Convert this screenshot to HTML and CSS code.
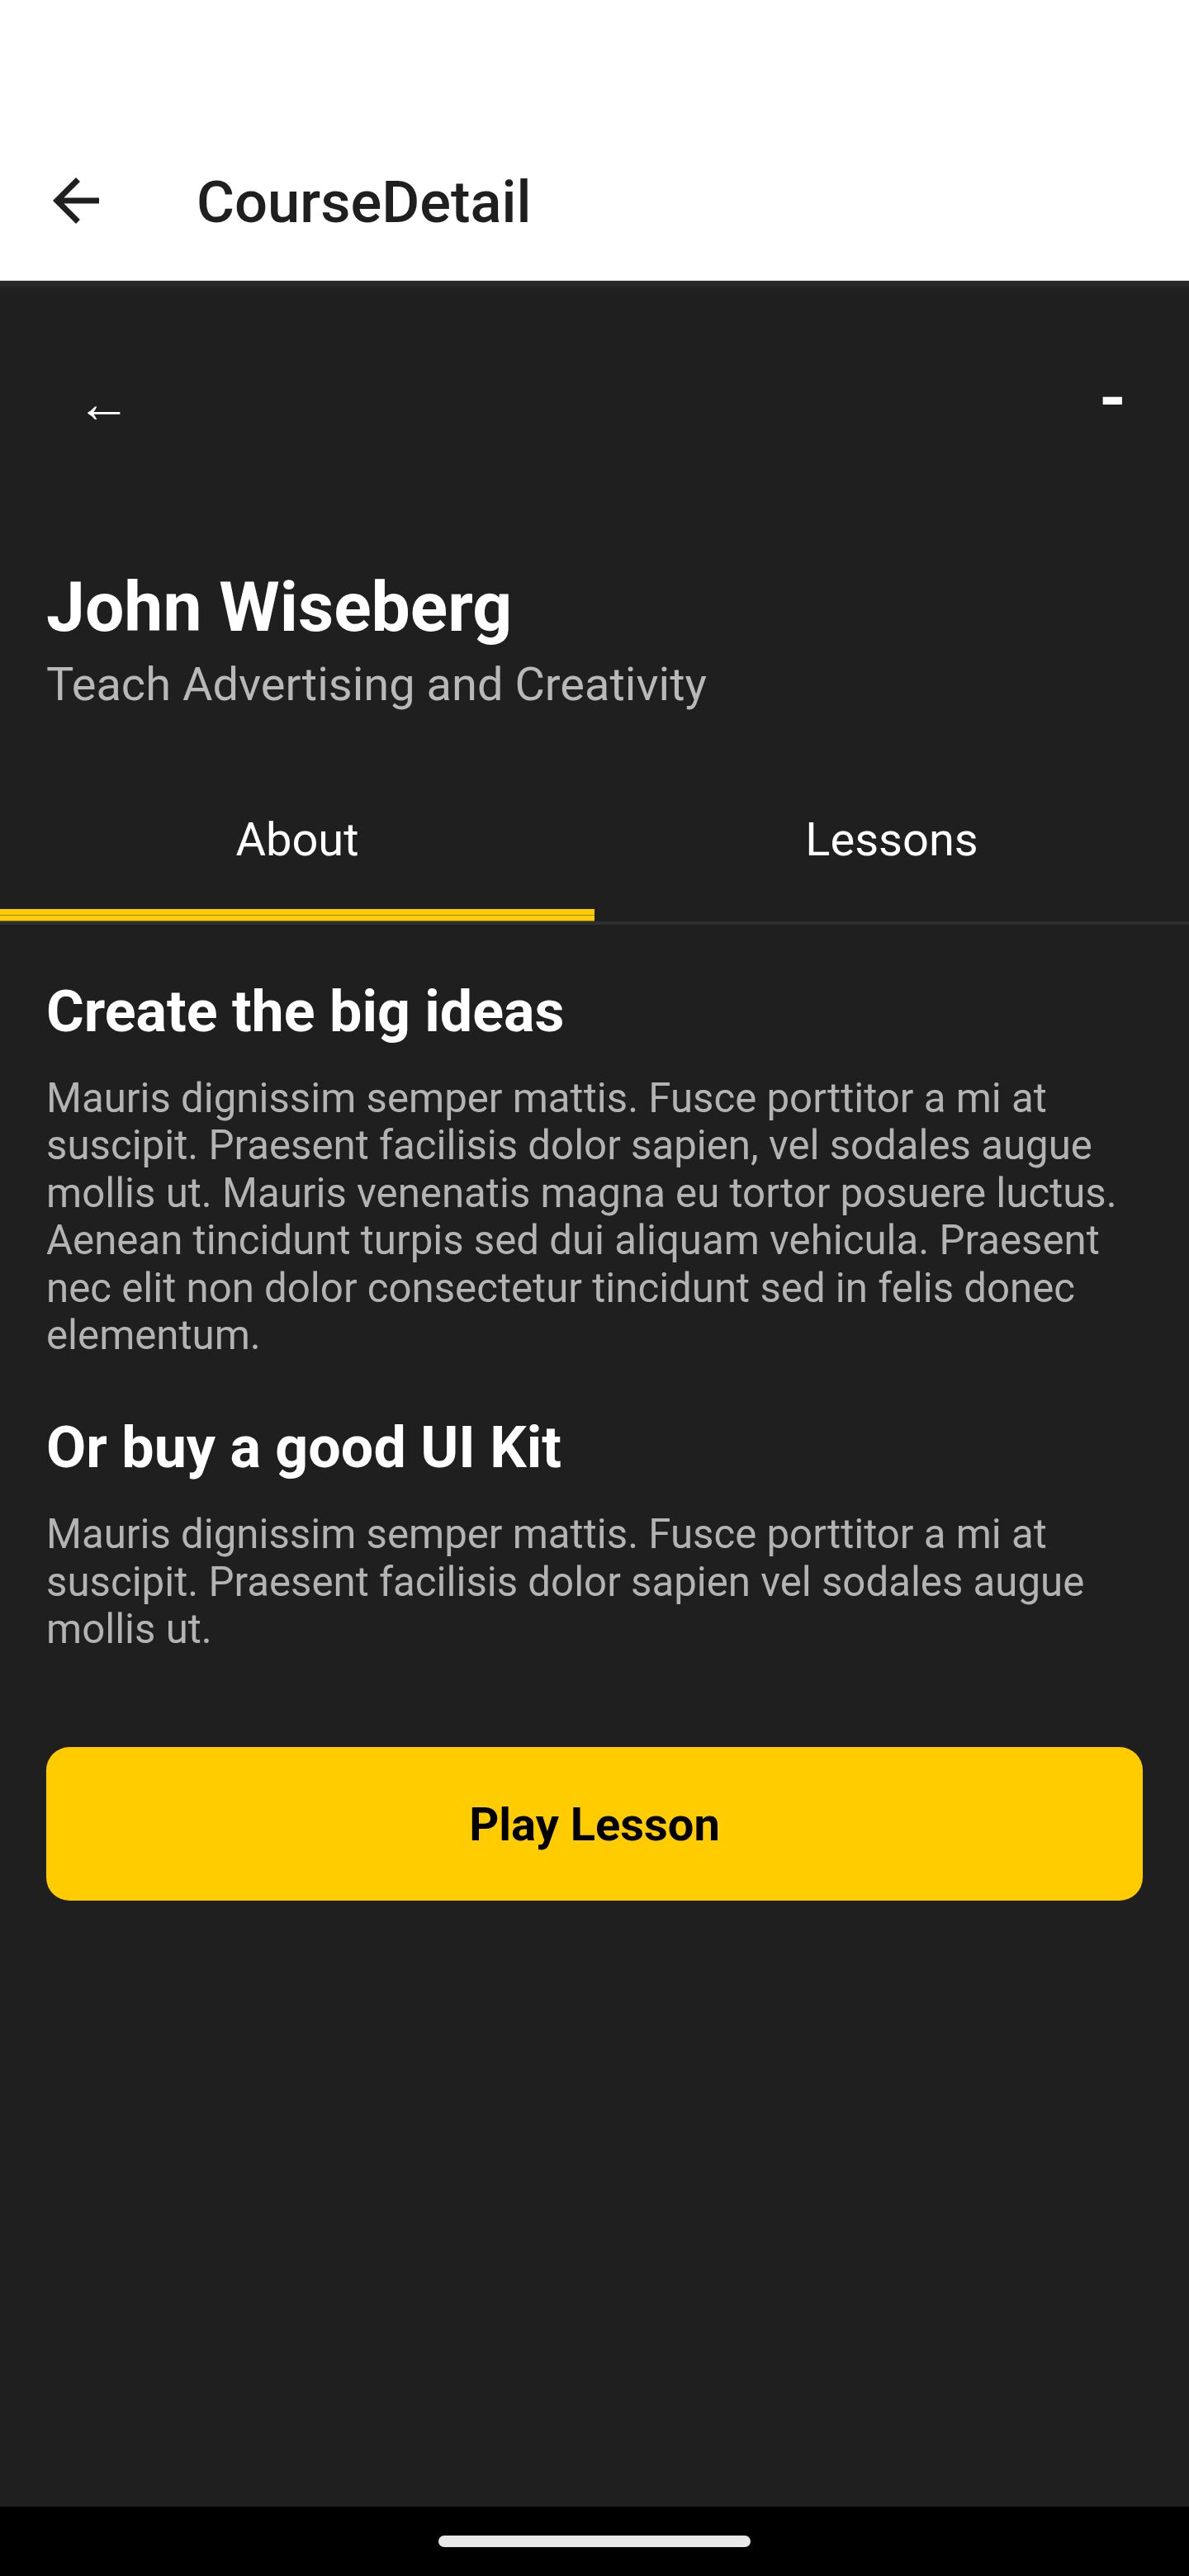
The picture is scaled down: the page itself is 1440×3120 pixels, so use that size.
FILE: index.html
```html
<!DOCTYPE html>
<html lang="en">
<head>
<meta charset="utf-8">
<title>CourseDetail</title>
<link rel="stylesheet" href="styles.css">
</head>
<body>
<div class="app">
  <header class="appbar">
    <svg class="appbar-back" viewBox="0 0 24 24" width="84" height="84" aria-hidden="true">
      <path d="M20 11H7.83l5.59-5.59L12 4l-8 8 8 8 1.41-1.41L7.83 13H20v-2z" fill="#1f1f1f"/>
    </svg>
    <h1 class="appbar-title">CourseDetail</h1>
  </header>
  <main class="content">
    <div class="hero-nav">
      <span class="hero-back">←</span>
      <span class="hero-dash">-</span>
    </div>
    <section class="profile">
      <h2 class="profile-name">John Wiseberg</h2>
      <p class="profile-role">Teach Advertising and Creativity</p>
    </section>
    <nav class="tabs">
      <div class="tab tab-active">
        <span class="tab-label">About</span>
        <div class="tab-indicator"></div>
      </div>
      <div class="tab">
        <span class="tab-label">Lessons</span>
        <div class="tab-indicator"></div>
      </div>
    </nav>
    <section class="about">
      <h3 class="about-title">Create the big ideas</h3>
      <p class="about-text">Mauris dignissim semper mattis. Fusce porttitor a mi at suscipit. Praesent facilisis dolor sapien, vel sodales augue mollis ut. Mauris venenatis magna eu tortor posuere luctus. Aenean tincidunt turpis sed dui aliquam vehicula. Praesent nec elit non dolor consectetur tincidunt sed in felis donec elementum.</p>
      <h3 class="about-title about-title-second">Or buy a good UI Kit</h3>
      <p class="about-text">Mauris dignissim semper mattis. Fusce porttitor a mi at suscipit. Praesent facilisis dolor sapien vel sodales augue mollis ut.</p>
      <button class="play-button" type="button">Play Lesson</button>
    </section>
  </main>
  <footer class="navbar">
    <div class="home-pill"></div>
  </footer>
</div>
</body>
</html>
```
FILE: styles.css
```css
* { box-sizing: border-box; }
html, body { margin: 0; padding: 0; }
body {
  width: 1440px;
  height: 3120px;
  background: #1f1f1f;
  font-family: Roboto, "Noto Sans", "Liberation Sans", sans-serif;
  overflow: hidden;
}
.app {
  display: flex;
  flex-direction: column;
  height: 3120px;
}
.appbar {
  height: 340px;
  flex: 0 0 340px;
  background: #ffffff;
  display: flex;
  align-items: flex-start;
  padding-top: 201px;
}
.appbar-back {
  display: block;
  margin-left: 50px;
  flex: 0 0 84px;
}
.appbar-title {
  margin: 0 0 0 104px;
  padding-top: 3px;
  font-size: 70.5px;
  font-weight: 500;
  line-height: 82px;
  color: #1f1f1f;
}
.content {
  flex: 1;
  background: linear-gradient(#2c2c2c 0, #222222 10px, #1f1f1f 16px);
  display: flex;
  flex-direction: column;
}
.hero-nav {
  height: 347px;
  display: flex;
  justify-content: space-between;
  align-items: flex-start;
  padding: 114px 76px 0 93px;
  color: #ffffff;
}
.hero-back {
  font-size: 66px;
  line-height: 70px;
}
.hero-dash {
  font-size: 84px;
  font-weight: 700;
  line-height: 70px;
  margin-top: -6px;
}
.profile {
  padding: 0 56px;
}
.profile-name {
  margin: 0;
  font-size: 84px;
  font-weight: 700;
  line-height: 98px;
  color: #ffffff;
}
.profile-role {
  margin: 12px 0 0;
  font-size: 56px;
  line-height: 65px;
  color: #b8b8b8;
}
.tabs {
  display: flex;
  border-bottom: 4px solid #2e2e2e;
}
.tab {
  flex: 1;
  display: flex;
  flex-direction: column;
  align-items: center;
  padding-top: 122px;
}
.tab-label {
  font-size: 56px;
  line-height: 66px;
  color: #ffffff;
}
.tab-indicator {
  align-self: stretch;
  height: 15px;
  margin-top: 51px;
}
.tab-active .tab-indicator {
  background: linear-gradient(#ffcc00 0, #ffcc00 7px, #9c8400 7px, #9c8400 8px, #ffcc00 8px, #ffcc00 14px, #7d6a10 14px);
}
.about {
  padding: 0 56px;
  display: flex;
  flex-direction: column;
}
.about-title {
  margin: 64px 0 0;
  font-size: 70px;
  font-weight: 700;
  line-height: 82px;
  color: #ffffff;
}
.about-title-second {
  margin-top: 66px;
}
.about-text {
  margin: 36px 0 0;
  font-size: 49.2px;
  line-height: 57.4px;
  color: #b3b3b3;
}
.play-button {
  margin-top: 113px;
  height: 186px;
  width: 100%;
  border: 0;
  border-radius: 28px;
  background: #ffcc00;
  color: #000000;
  font-family: Roboto, "Noto Sans", "Liberation Sans", sans-serif;
  font-size: 56px;
  font-weight: 700;
  padding-top: 4px;
  cursor: pointer;
}
.navbar {
  height: 84px;
  flex: 0 0 84px;
  background: #000000;
  display: flex;
  justify-content: center;
  padding-top: 35px;
}
.home-pill {
  width: 378px;
  height: 14px;
  border-radius: 7px;
  background: #e8e8e8;
}
```
